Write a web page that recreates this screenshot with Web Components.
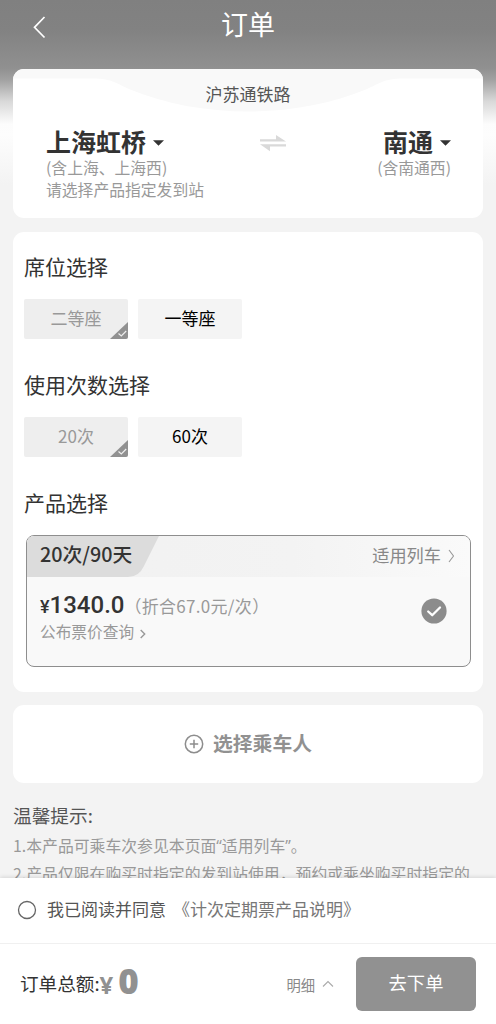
<!DOCTYPE html>
<html lang="zh-CN">
<head>
<meta charset="utf-8">
<title>订单</title>
<style>
    html, body {
        margin: 0;
        height: 100%;
        overflow: hidden;
    }
    body {
        font-family: "Noto Sans CJK SC", sans-serif;
        color: #333;
        --grey: #919191;
        --muted: #999;
    }
    /* narrow western quotes inside the chinese text */
    .q {
        font-family: "Open Sans", sans-serif;
    }
</style>
</head>
<body>
<order-page>
    <page-header slot="top">订单</page-header>

    <route-card line="沪苏通铁路">
        <station-pick name="上海虹桥">
            <span>(含上海、上海西)</span>
            <span>请选择产品指定发到站</span>
        </station-pick>
        <station-pick slot="to" name="南通">
            <span>(含南通西)</span>
        </station-pick>
    </route-card>

    <option-card>
        <option-group label="席位选择">
            <option-chip selected>二等座</option-chip>
            <option-chip>一等座</option-chip>
        </option-group>
        <option-group label="使用次数选择">
            <option-chip selected>20次</option-chip>
            <option-chip>60次</option-chip>
        </option-group>
        <option-group label="产品选择">
            <product-card name="20次/90天" price="1340.0" average="（折合67.0元/次）"></product-card>
        </option-group>
    </option-card>

    <add-passenger>选择乘车人</add-passenger>

    <tip-list label="温馨提示:">
        <div>1.本产品可乘车次参见本页面<span class="q">“</span>适用列车<span class="q">”</span>。</div>
        <div>2.产品仅限在购买时指定的发到站使用，预约或乘坐购买时指定的</div>
    </tip-list>

    <order-footer slot="bottom" total="0">
        <span>我已阅读并同意</span>
        <span slot="link">《计次定期票产品说明》</span>
    </order-footer>
</order-page>

<script>
function define(name, render) {
    customElements.define(name, class extends HTMLElement {
        constructor() {
            super();
            this.attachShadow({ mode: "open" });
        }

        connectedCallback() {
            this.shadowRoot.innerHTML = render(this);
        }
    });
}

define("order-page", () => `
    <style>
        :host {
            display: flex;
            flex-direction: column;
            height: 100vh;
            background: linear-gradient(#808080 0, #828282 30px, #909090 68px, #a2a2a2 80px, #d8d8d8 101px, #fcfcfc 124px, #fdfdfd 135px, #f3f3f3 185px);
        }
        main {
            flex: 1;
            min-height: 0;
            overflow: hidden;
            display: flex;
            flex-direction: column;
            padding: 0 13px;
        }
    </style>
    <slot name="top"></slot>
    <main><slot></slot></main>
    <slot name="bottom"></slot>
`);

define("page-header", () => `
    <style>
        :host {
            display: grid;
            grid-template-columns: 80px 1fr 80px;
            height: 69px;
            flex: none;
            color: #fff;
        }
        svg {
            margin: 15px 0 0 31px;
        }
        h1 {
            margin: 4px 0 0;
            font-size: 27px;
            line-height: 40px;
            font-weight: 400;
            text-align: center;
        }
    </style>
    <svg width="16" height="24" viewBox="0 0 16 24" fill="none" stroke="#fff" stroke-width="1.7">
        <path d="M13.5 2 3.5 12.3 13.5 22.5"/>
    </svg>
    <h1><slot></slot></h1>
`);

define("route-card", el => `
    <style>
        :host {
            display: block;
            position: relative;
            flex: none;
            height: 149px;
            border-radius: 11px;
            background: #fff;
            overflow: hidden;
        }
        .wave {
            position: absolute;
            left: 0;
            top: 0;
        }
        .line, .route {
            position: relative;
        }
        .line {
            padding-top: 12px;
            font-size: 17px;
            line-height: 26px;
            text-align: center;
            color: #555;
        }
        .route {
            display: grid;
            grid-template-columns: 213px auto 1fr;
            padding: 19px 32px 0 33px;
        }
        .swap {
            margin-top: 8px;
        }
        .to {
            display: flex;
            justify-content: flex-end;
        }
    </style>
    <svg class="wave" width="470" height="45" viewBox="0 0 470 45">
        <path fill="#f9f9f9" d="M0 0H470V9.5H390C370 9.5 366 15 354 20C282 50 188 50 116 20C104 15 100 9.5 80 9.5H0Z"/>
    </svg>
    <div class="line">${el.getAttribute("line")}</div>
    <div class="route">
        <slot></slot>
        <svg class="swap" width="28" height="18" viewBox="0 0 28 18" fill="#d9d9d9">
            <path d="M1 5.3H17V1L27 7.5H1ZM27 10.3H1L11 17.3V12.5H27Z"/>
        </svg>
        <div class="to"><slot name="to"></slot></div>
    </div>
`);

define("station-pick", el => `
    <style>
        :host {
            display: flex;
            flex-direction: column;
            font-size: 15.8px;
            line-height: 21.5px;
            color: var(--muted);
        }
        :host([slot="to"]) .name {
            justify-content: flex-end;
        }
        .name {
            display: flex;
            align-items: center;
            height: 31px;
            gap: 7px;
            font-size: 25px;
            font-weight: 700;
            color: #333;
        }
        .name svg {
            margin-top: 2px;
        }
    </style>
    <div class="name">
        ${el.getAttribute("name")}
        <svg width="11" height="6" viewBox="0 0 11 6"><path d="M0 .3H11L5.5 5.7Z" fill="#333"/></svg>
    </div>
    <slot></slot>
`);

define("option-card", () => `
    <style>
        :host {
            display: block;
            flex: none;
            box-sizing: border-box;
            height: 460px;
            margin-top: 14px;
            padding: 19px 11px 0;
            border-radius: 11px;
            background: #fff;
        }
    </style>
    <slot></slot>
`);

define("option-group", el => `
    <style>
        :host {
            display: block;
            height: 118px;
        }
        h2 {
            margin: 0 0 18px;
            font-size: 21px;
            line-height: 30px;
            font-weight: 400;
        }
        .row {
            display: flex;
            gap: 10px;
        }
    </style>
    <h2>${el.getAttribute("label")}</h2>
    <div class="row"><slot></slot></div>
`);

define("option-chip", el => `
    <style>
        :host {
            display: flex;
            position: relative;
            align-items: center;
            justify-content: center;
            width: 104px;
            height: 40px;
            padding-bottom: 3px;
            box-sizing: border-box;
            border-radius: 2px;
            overflow: hidden;
            background: #f4f4f4;
            font-size: 17px;
            line-height: 26px;
            color: #000;
        }
        :host([selected]) {
            background: #eee;
            color: var(--muted);
        }
        svg {
            position: absolute;
            right: 0;
            bottom: 0;
        }
    </style>
    <slot></slot>
    ${el.hasAttribute("selected") ? `
        <svg width="18" height="17" viewBox="0 0 18 17">
            <path d="M18 0V17H0Z" fill="#919191"/>
            <path d="M8.5 11.5 11.3 14 16.2 9" fill="none" stroke="#eee" stroke-width="1.2"/>
        </svg>` : ""}
`);

define("product-card", el => `
    <style>
        :host {
            display: block;
            flex: 1;
            box-sizing: border-box;
            height: 132px;
            margin: 0 1px 0 2px;
            border: 1px solid #8e8e8e;
            border-radius: 8px;
            background: #f9f9f9;
            overflow: hidden;
        }
        .head {
            display: flex;
            position: relative;
            justify-content: space-between;
            height: 41px;
            padding: 0 15px 0 13px;
            background: linear-gradient(90deg, #f1f1f1, #f3f3f3 60%, #fafafa);
        }
        .tab {
            position: absolute;
            left: 0;
            top: 0;
        }
        .name {
            position: relative;
            font-size: 19.8px;
            font-weight: 500;
            line-height: 36px;
        }
        .trains {
            display: flex;
            align-items: center;
            gap: 7px;
            height: 36px;
            font-size: 17.2px;
            color: #888;
        }
        .trains svg {
            margin-top: 4px;
        }
        .body {
            display: flex;
            align-items: flex-start;
            justify-content: space-between;
            padding: 14px 23px 0 13px;
        }
        .price {
            display: flex;
            align-items: baseline;
            height: 29px;
            line-height: 28px;
        }
        .yen {
            font: 500 18px/28px Roboto, sans-serif;
        }
        .num {
            font: 500 24px/28px Roboto, sans-serif;
        }
        .avg {
            font-size: 17px;
            letter-spacing: .3px;
            color: var(--muted);
        }
        .query {
            display: flex;
            align-items: center;
            gap: 6px;
            font-size: 15.7px;
            line-height: 24px;
            color: var(--muted);
        }
        .query svg {
            margin-top: 4px;
        }
        .check {
            margin-top: 7px;
        }
    </style>
    <div class="head">
        <svg class="tab" width="134" height="41" viewBox="0 0 134 41">
            <path d="M0 0H132L117 30Q112 41 101 41H0Z" fill="#dcdcdc"/>
        </svg>
        <div class="name">${el.getAttribute("name")}</div>
        <div class="trains">
            适用列车
            <svg width="7" height="14" viewBox="0 0 7 14" fill="none" stroke="#999" stroke-width="1.1">
                <path d="M1 1 5.5 7 1 13"/>
            </svg>
        </div>
    </div>
    <div class="body">
        <div>
            <div class="price">
                <span class="yen">¥</span><span class="num">${el.getAttribute("price")}</span>
                <span class="avg">${el.getAttribute("average")}</span>
            </div>
            <div class="query">
                公布票价查询
                <svg width="6" height="10" viewBox="0 0 6 10" fill="none" stroke="#999" stroke-width="1.4">
                    <path d="M.7 1 4.7 5 .7 9"/>
                </svg>
            </div>
        </div>
        <svg class="check" width="26" height="26" viewBox="0 0 26 26">
            <circle cx="13" cy="13" r="12.6" fill="#8c8c8c"/>
            <path d="M7.2 13.5 11.2 17.2 19 9.5" fill="none" stroke="#fff" stroke-width="2.3" stroke-linecap="round" stroke-linejoin="round"/>
        </svg>
    </div>
`);

define("add-passenger", () => `
    <style>
        :host {
            display: flex;
            flex: none;
            align-items: center;
            justify-content: center;
            gap: 9px;
            height: 78px;
            margin-top: 13px;
            border-radius: 11px;
            background: #fff;
            font-size: 19.8px;
            font-weight: 700;
            color: var(--grey);
        }
        span {
            padding-bottom: 3px;
        }
    </style>
    <svg width="20" height="20" viewBox="0 0 20 20" fill="none" stroke="#8d8d8d" stroke-width="1.5">
        <circle cx="10" cy="10" r="8.7"/>
        <path d="M10 5.8V14.2M5.8 10H14.2"/>
    </svg>
    <span><slot></slot></span>
`);

define("tip-list", el => `
    <style>
        :host {
            display: block;
            flex: none;
            margin-top: 18px;
            font-size: 15.85px;
            line-height: 28px;
            color: var(--muted);
            white-space: nowrap;
        }
        h3 {
            margin: 0 0 3px;
            font-size: 18.7px;
            line-height: 28px;
            font-weight: 400;
            color: #555;
        }
    </style>
    <h3>${el.getAttribute("label")}</h3>
    <slot></slot>
`);

define("order-footer", el => `
    <style>
        :host {
            display: flex;
            flex-direction: column;
            flex: none;
            height: 146px;
            background: #fff;
            box-shadow: 0 -1px 4px rgba(0, 0, 0, .12);
        }
        .agree {
            display: flex;
            align-items: center;
            box-sizing: border-box;
            height: 66px;
            padding: 0 0 4px 17px;
            border-bottom: 1px solid #f0f0f0;
            font-size: 17px;
            color: #555;
        }
        .agree svg {
            margin: 3px 10px 0 0;
        }
        .link {
            margin-left: 7px;
            color: #777;
        }
        .pay {
            display: flex;
            align-items: center;
            height: 80px;
            padding: 0 20px;
        }
        .label {
            padding-bottom: 4px;
            font-size: 18.6px;
        }
        .sum {
            display: flex;
            align-items: baseline;
            gap: 5px;
            padding-bottom: 6px;
            font-family: "Open Sans", sans-serif;
            font-weight: 700;
            color: var(--grey);
        }
        .sum small {
            font-size: 24px;
        }
        .sum b {
            font-size: 35px;
            line-height: 40px;
        }
        .detail {
            display: flex;
            align-items: center;
            gap: 7px;
            margin: 0 22px 0 auto;
            font-size: 14.3px;
            color: #888;
        }
        button {
            width: 120px;
            height: 54px;
            padding: 0 0 5px;
            border: none;
            border-radius: 6px;
            background: var(--grey);
            font: 400 18.3px "Noto Sans CJK SC", sans-serif;
            color: #fff;
        }
    </style>
    <div class="agree">
        <svg width="20" height="20" viewBox="0 0 20 20"><circle cx="10" cy="10" r="8.5" fill="none" stroke="#666" stroke-width="1.3"/></svg>
        <slot></slot>
        <span class="link"><slot name="link"></slot></span>
    </div>
    <div class="pay">
        <span class="label">订单总额:</span>
        <span class="sum"><small>¥</small><b>${el.getAttribute("total")}</b></span>
        <span class="detail">
            明细
            <svg width="12" height="8" viewBox="0 0 12 8" fill="none" stroke="#aaa" stroke-width="1.1"><path d="M1 6.5 6 1.5 11 6.5"/></svg>
        </span>
        <button>去下单</button>
    </div>
`);
</script>
</body>
</html>
